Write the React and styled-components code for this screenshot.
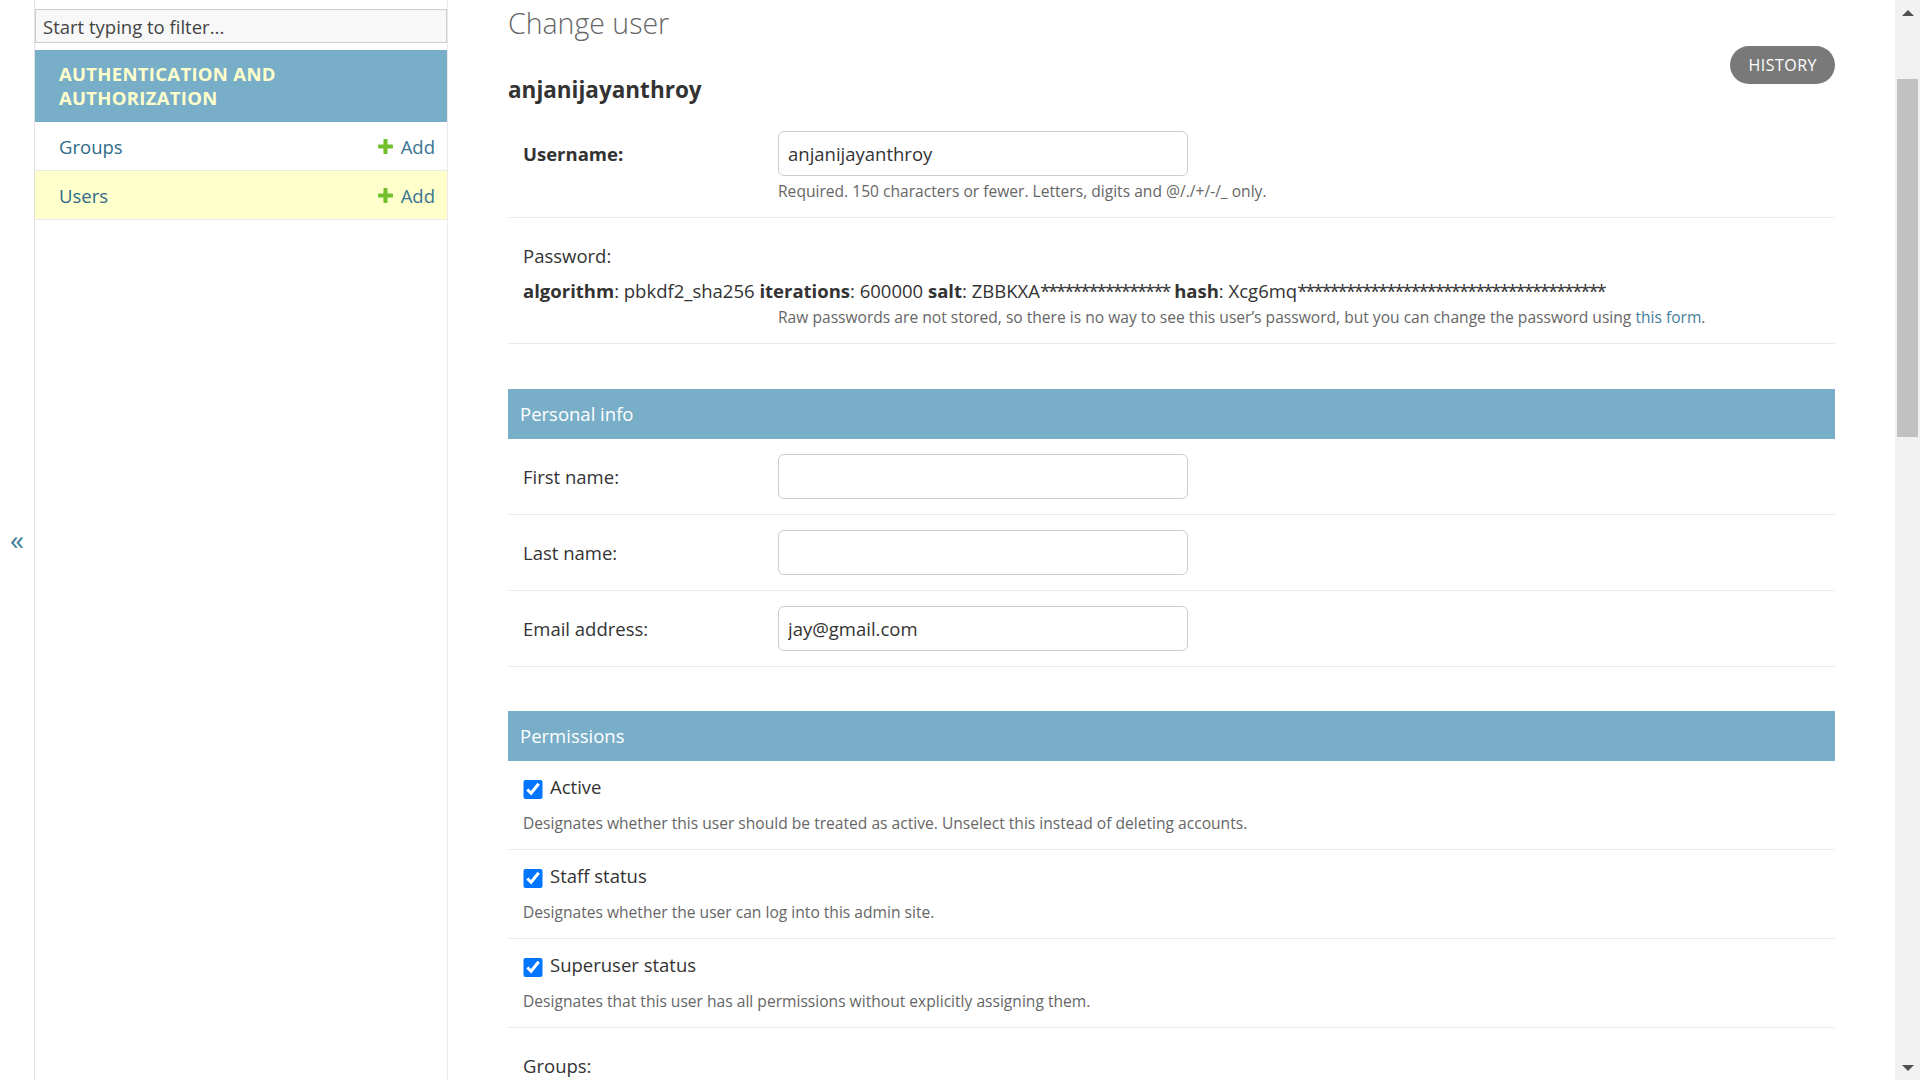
import React from 'react';
import styled, { createGlobalStyle } from 'styled-components';

const GlobalStyle = createGlobalStyle`
  html, body {
    margin: 0;
    padding: 0;
    height: 100%;
    overflow: hidden;
    background: #fff;
    color: #333;
    font-family: "Open Sans", "Liberation Sans", sans-serif;
  }
  * { box-sizing: border-box; }
`;

const Shell = styled.div`
  display: flex;
  height: 100vh;
`;

const ToggleColumn = styled.div`
  flex: 0 0 35px;
  display: flex;
  align-items: center;
  justify-content: center;
  border-right: 1px solid #e2e2e2;
  color: #447e9b;
  font-size: 28px;
  line-height: 1;
  padding-bottom: 2px;
`;

const Sidebar = styled.nav`
  flex: 0 0 413px;
  border-right: 1px solid #eaeaea;
`;

const FilterInput = styled.input`
  display: block;
  width: 100%;
  height: 34px;
  margin: 9px 0 7px;
  padding: 0 7px;
  border: 1px solid #ccc;
  background: #f8f8f8;
  color: #444;
  font: 18.5px "Open Sans", sans-serif;
  &::placeholder { color: #444; }
`;

const ModuleCaption = styled.div`
  background: #79aec8;
  color: #ffc;
  padding: 12px 24px;
  font-size: 18.5px;
  font-weight: 700;
  line-height: 24px;
  letter-spacing: 0.3px;
  text-transform: uppercase;
`;

const ModelRow = styled.div`
  display: flex;
  align-items: center;
  justify-content: space-between;
  height: 49px;
  padding: 0 12px 0 24px;
  border-bottom: 1px solid #eaeaea;
  background: ${p => (p.$current ? '#ffc' : '#fff')};
  font-size: 18.5px;
`;

const ModelLink = styled.span`
  color: #2f6c8a;
`;

const AddLink = styled.span`
  display: flex;
  align-items: center;
  gap: 6px;
  color: #3a7593;
`;

const Content = styled.main`
  flex: 1;
  min-width: 0;
  padding: 5px 60px 0;
  overflow: hidden;
`;

const Title = styled.h1`
  margin: 0;
  font-size: 28.5px;
  font-weight: 300;
  line-height: 36px;
  color: #666;
`;

const HeadRow = styled.div`
  display: flex;
  justify-content: space-between;
  align-items: flex-start;
`;

const Subtitle = styled.h2`
  margin: 34px 0 11px;
  font-size: 22.5px;
  font-weight: 700;
  line-height: 30px;
  color: #333;
`;

const HistoryButton = styled.a`
  margin-top: 5px;
  height: 38px;
  padding: 0 18px;
  border-radius: 19px;
  background: #797979;
  color: #fff;
  font-size: 16px;
  line-height: 38px;
  letter-spacing: 0.5px;
  text-transform: uppercase;
`;

const Fieldset = styled.section`
  margin-bottom: 44.5px;
`;

const FieldsetHeader = styled.h2`
  margin: 0;
  padding: 12px;
  background: #79aec8;
  color: #fff;
  font-size: 18.5px;
  font-weight: 400;
  line-height: 26px;
`;

const FormRow = styled.div`
  display: ${p => (p.$stack ? 'block' : 'flex')};
  padding: 15px;
  border-bottom: 1px solid #eaeaea;
  font-size: 18.5px;
`;

const Label = styled.label`
  flex: 0 0 255px;
  display: block;
  line-height: 45px;
  font-weight: ${p => (p.$required ? 700 : 400)};
  color: #333;
`;

const Field = styled.div`
  display: flex;
  flex-direction: column;
`;

const TextInput = styled.input`
  width: 410px;
  height: 45px;
  padding: 0 9px;
  border: 1px solid #ccc;
  border-radius: 6px;
  color: #333;
  font: 18.5px "Open Sans", sans-serif;
`;

const Help = styled.div`
  margin-top: ${p => p.$top || '4px'};
  padding-left: ${p => p.$indent || '0'};
  font-size: 15.6px;
  line-height: 22px;
  color: #666;
`;

const HelpLink = styled.a`
  color: #447e9b;
`;

const ReadOnly = styled.div`
  line-height: 25px;
`;

const Masked = styled.span`
  letter-spacing: -2.1px;
`;

const CheckLine = styled.div`
  display: flex;
  align-items: center;
  height: 20px;
  gap: 7.5px;
`;

const CheckBox = styled.input`
  width: 19.5px;
  height: 19.5px;
  margin: 7px 0 0;
`;

const Scrollbar = styled.div`
  flex: 0 0 25px;
  display: flex;
  flex-direction: column;
  background: #f1f1f1;
`;

const ScrollArrow = styled.div`
  height: 25px;
  display: flex;
  align-items: center;
  justify-content: center;
  &::before {
    content: '';
    border-left: 6px solid transparent;
    border-right: 6px solid transparent;
    ${p => (p.$down ? 'border-top' : 'border-bottom')}: 6px solid #505050;
  }
`;

const ScrollTrack = styled.div`
  flex: 1;
  padding: 0 2px;
`;

const ScrollThumb = styled.div`
  height: 358px;
  margin-top: 54px;
  background: #c1c1c1;
`;

const PlusIcon = () => (
  <svg width="19" height="19" viewBox="0 0 1792 1792" aria-hidden="true">
    <path
      fill="#70bf2b"
      d="M1600 796v192q0 40-28 68t-68 28h-416v416q0 40-28 68t-68 28h-192q-40 0-68-28t-28-68v-416h-416q-40 0-68-28t-28-68v-192q0-40 28-68t68-28h416v-416q0-40 28-68t68-28h192q40 0 68 28t28 68v416h416q40 0 68 28t28 68z"
    />
  </svg>
);

const models = [
  { name: 'Groups', current: false },
  { name: 'Users', current: true },
];

const personal = [
  { label: 'First name:', value: '' },
  { label: 'Last name:', value: '' },
  { label: 'Email address:', value: 'jay@gmail.com' },
];

const permissions = [
  {
    label: 'Active',
    help: 'Designates whether this user should be treated as active. Unselect this instead of deleting accounts.',
  },
  { label: 'Staff status', help: 'Designates whether the user can log into this admin site.' },
  {
    label: 'Superuser status',
    help: 'Designates that this user has all permissions without explicitly assigning them.',
  },
];

const App = () => (
  <>
    <GlobalStyle />
    <Shell>
      <ToggleColumn>«</ToggleColumn>
      <Sidebar>
        <FilterInput placeholder="Start typing to filter..." />
        <ModuleCaption>Authentication and Authorization</ModuleCaption>
        {models.map(m => (
          <ModelRow key={m.name} $current={m.current}>
            <ModelLink>{m.name}</ModelLink>
            <AddLink>
              <PlusIcon />
              Add
            </AddLink>
          </ModelRow>
        ))}
      </Sidebar>
      <Content>
        <Title>Change user</Title>
        <HeadRow>
          <Subtitle>anjanijayanthroy</Subtitle>
          <HistoryButton>History</HistoryButton>
        </HeadRow>

        <Fieldset>
          <FormRow>
            <Label $required>Username:</Label>
            <Field>
              <TextInput defaultValue="anjanijayanthroy" />
              <Help>Required. 150 characters or fewer. Letters, digits and @/./+/-/_ only.</Help>
            </Field>
          </FormRow>
          <FormRow $stack>
            <Label>Password:</Label>
            <ReadOnly>
              <strong>algorithm</strong>: pbkdf2_sha256 <strong>iterations</strong>: 600000{' '}
              <strong>salt</strong>: ZBBKXA<Masked>****************</Masked> <strong>hash</strong>:{' '}
              Xcg6mq<Masked>**************************************</Masked>
            </ReadOnly>
            <Help $top="3px" $indent="255px">
              Raw passwords are not stored, so there is no way to see this user’s password, but you can
              change the password using <HelpLink>this form</HelpLink>.
            </Help>
          </FormRow>
        </Fieldset>

        <Fieldset>
          <FieldsetHeader>Personal info</FieldsetHeader>
          {personal.map(f => (
            <FormRow key={f.label}>
              <Label>{f.label}</Label>
              <Field>
                <TextInput defaultValue={f.value} />
              </Field>
            </FormRow>
          ))}
        </Fieldset>

        <Fieldset>
          <FieldsetHeader>Permissions</FieldsetHeader>
          {permissions.map(p => (
            <FormRow key={p.label} $stack>
              <CheckLine>
                <CheckBox type="checkbox" defaultChecked />
                <span>{p.label}</span>
              </CheckLine>
              <Help $top="16px">{p.help}</Help>
            </FormRow>
          ))}
          <FormRow $stack>
            <Label>Groups:</Label>
          </FormRow>
        </Fieldset>
      </Content>
      <Scrollbar>
        <ScrollArrow />
        <ScrollTrack>
          <ScrollThumb />
        </ScrollTrack>
        <ScrollArrow $down />
      </Scrollbar>
    </Shell>
  </>
);

export default App;
